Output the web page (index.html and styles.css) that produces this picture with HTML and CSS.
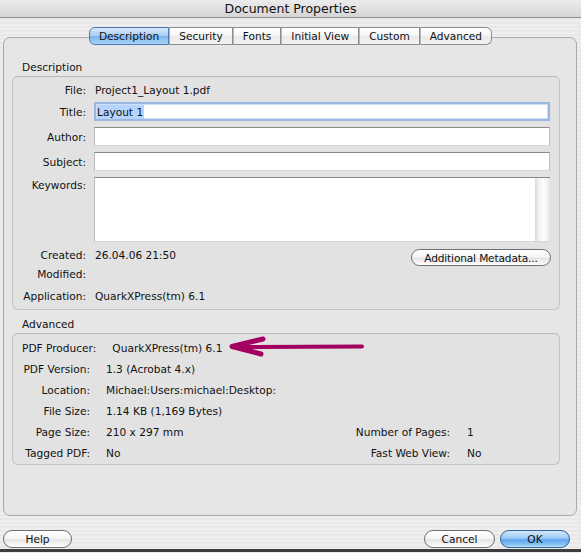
FILE: index.html
```html
<!DOCTYPE html>
<html>
<head>
<meta charset="utf-8">
<title>Document Properties</title>
<link rel="stylesheet" href="styles.css">
</head>
<body>
<div class="window">
  <div class="titlebar">Document Properties</div>
  <div class="tabs">
    <span class="tab sel">Description</span>
    <span class="tab">Security</span>
    <span class="tab">Fonts</span>
    <span class="tab">Initial View</span>
    <span class="tab">Custom</span>
    <span class="tab last">Advanced</span>
  </div>
  <div class="tabbox">
    <div class="glabel first">Description</div>
    <div class="group desc">
      <div class="row r-file"><span class="lbl">File:</span><span class="val">Project1_Layout 1.pdf</span></div>
      <div class="row r-field"><span class="lbl">Title:</span><span class="field focus"><span class="selected">Layout 1</span></span></div>
      <div class="row r-field gap6"><span class="lbl">Author:</span><span class="field"></span></div>
      <div class="row r-field gap6"><span class="lbl">Subject:</span><span class="field"></span></div>
      <div class="row r-kw gap6"><span class="lbl">Keywords:</span><span class="field kw"><span class="kwtext"></span><span class="scroll"></span></span></div>
      <div class="row r-created"><span class="lbl">Created:</span><span class="val">26.04.06 21:50</span><span class="btn meta">Additional Metadata...</span></div>
      <div class="row r-mod"><span class="lbl">Modified:</span><span class="val"></span></div>
      <div class="row r-app"><span class="lbl">Application:</span><span class="val">QuarkXPress(tm) 6.1</span></div>
    </div>
    <div class="glabel second">Advanced</div>
    <div class="group adv">
      <div class="arow"><span class="alb">PDF Producer:</span><span class="aval">QuarkXPress(tm) 6.1</span></div>
      <div class="arow"><span class="alb">PDF Version:</span><span class="aval">1.3 (Acrobat 4.x)</span></div>
      <div class="arow"><span class="alb">Location:</span><span class="aval">Michael:Users:michael:Desktop:</span></div>
      <div class="arow"><span class="alb">File Size:</span><span class="aval">1.14 KB (1,169 Bytes)</span></div>
      <div class="arow"><span class="alb">Page Size:</span><span class="aval">210 x 297 mm</span><span class="rlb">Number of Pages:</span><span class="rval">1</span></div>
      <div class="arow"><span class="alb">Tagged PDF:</span><span class="aval">No</span><span class="rlb">Fast Web View:</span><span class="rval">No</span></div>
    </div>
  </div>
  <div class="footer">
    <span class="btn help">Help</span>
    <span class="spacer"></span>
    <span class="btn cancel">Cancel</span>
    <span class="btn ok">OK</span>
  </div>
  <div class="bottomedge"></div>
  <svg class="arrow" width="140" height="24" viewBox="0 0 140 24">
    <path d="M8 12 L135 11.5" stroke="#a4005f" stroke-width="4" stroke-linecap="round" fill="none"/>
    <path d="M36 4 L5 11.5 L34 19" stroke="#a4005f" stroke-width="5" stroke-linecap="round" stroke-linejoin="round" fill="none"/>
  </svg>
</div>
</body>
</html>
```

FILE: styles.css
```css
* { box-sizing: border-box; }
html, body { margin: 0; padding: 0; }
body {
  width: 581px;
  height: 553px;
  overflow: hidden;
  font-family: "DejaVu Sans", "Liberation Sans", sans-serif;
  font-size: 10.6px;
  color: #111;
  background: #ececec;
}
.window {
  position: relative;
  width: 581px;
  height: 553px;
  display: flex;
  flex-direction: column;
  background: repeating-linear-gradient(to bottom, #eeeeee 0 2px, #e8e8e8 2px 4px);
}
.titlebar {
  height: 18px;
  line-height: 17px;
  text-align: center;
  font-size: 12.5px;
  color: #111;
  background: linear-gradient(#ececec, #d6d6d6);
  border-bottom: 1px solid #8e8e8e;
  flex: none;
}
.tabs {
  display: flex;
  justify-content: center;
  margin-top: 9px;
  height: 18px;
  position: relative;
  z-index: 2;
  flex: none;
}
.tab {
  height: 18px;
  line-height: 16px;
  padding: 0 9px;
  border: 1px solid #8f8f8f;
  border-left: 1px solid #b4b4b4;
  background: linear-gradient(#ffffff, #f4f4f4 50%, #e9e9e9 51%, #f3f3f3);
}
.tab.sel {
  border: 1px solid #4f79ad;
  border-radius: 6px 0 0 6px;
  background: linear-gradient(#d7e8fa, #a9cdf3 48%, #7fb5ec 52%, #a8d3f8);
}
.tab.last {
  border-radius: 0 6px 6px 0;
  border-right: 1px solid #8f8f8f;
}
.tabbox {
  margin: -8px 4px 0 3px;
  border: 1px solid #a9a9a9;
  border-radius: 7px;
  background: #e6e6e6;
  padding: 22px 16px 50px 8px;
  flex: none;
}
.glabel {
  height: 15px;
  line-height: 14px;
  padding-left: 10px;
}
.glabel.first { margin-bottom: 1px; }
.glabel.second { margin-top: 7px; margin-bottom: 1px; }
.group {
  border: 1px solid #c3c3c3;
  border-top-color: #b8b8b8;
  border-radius: 6px;
  background: #e2e2e2;
}
.desc { padding: 3px 9px 4px 0; }
.row { display: flex; align-items: center; height: 19px; }
.lbl { width: 73px; text-align: right; margin-right: 8px; flex: none; }
.val { padding-left: 1px; }
.r-field { margin-top: 3px; }
.gap6 { margin-top: 6px; }
.field {
  flex: 1;
  height: 19px;
  background: #fff;
  border-top: 1px solid #8a8a8a;
  border-left: 1px solid #bcbcbc;
  border-right: 1px solid #bcbcbc;
  border-bottom: 1px solid #d6d6d6;
  display: flex;
  align-items: center;
  padding-left: 2px;
}
.field.focus {
  border: 2px solid #9ab9e0;
  box-shadow: inset 0 0 0 1px #cfdff3;
  padding-left: 1px;
}
.selected { background: #b5d5ff; line-height: 14px; padding: 0 1px 0 0; }
.r-kw { height: 65px; align-items: flex-start; }
.r-kw .lbl { line-height: 17px; }
.field.kw { height: 65px; padding: 0; align-items: stretch; border-right: none; }
.kwtext { flex: 1; }
.scroll {
  width: 15px;
  background: linear-gradient(to right, #d9d9d9, #f2f2f2 25%, #fdfdfd 55%, #f1f1f1 85%, #e0e0e0);
}
.r-created { margin-top: 3px; align-items: center; }
.r-app { margin-top: 3px; }
.btn {
  display: inline-flex;
  align-items: center;
  justify-content: center;
  white-space: nowrap;
  border: 1px solid #6e6e6e;
  border-radius: 9px;
  background: linear-gradient(#ffffff, #f6f6f6 45%, #e4e4e4 55%, #f6f6f6 85%, #ffffff);
}
.btn.meta {
  margin-left: auto;
  margin-right: -1px;
  margin-top: 6px;
  height: 17px;
  width: 140px;
  letter-spacing: -0.15px;
  padding: 0;
}
.adv { padding: 3px 0 1px 9px; }
.arow { display: flex; align-items: center; height: 21px; }
.alb { min-width: 68px; text-align: right; margin-right: 16px; flex: none; }
.aval { flex: 1; }
.rlb { text-align: right; margin-right: 17px; }
.rval { width: 92px; flex: none; }
.footer {
  display: flex;
  align-items: center;
  margin-top: 14px;
  padding: 0 11px 0 3px;
  height: 18px;
  flex: none;
}
.spacer { flex: 1; }
.footer .btn { height: 18px; }
.help { width: 69px; }
.cancel { width: 71px; margin-right: 5px; }
.ok {
  width: 70px;
  border-color: #30609f;
  background: linear-gradient(#d3e7fb, #9ccaf5 45%, #5fa4ec 55%, #86c2f5 85%, #c2e3fd);
}
.bottomedge {
  margin-top: 1px;
  height: 3px;
  background: #3d3d3d;
  flex: none;
}
.arrow {
  position: absolute;
  left: 227px;
  top: 335px;
}
```
